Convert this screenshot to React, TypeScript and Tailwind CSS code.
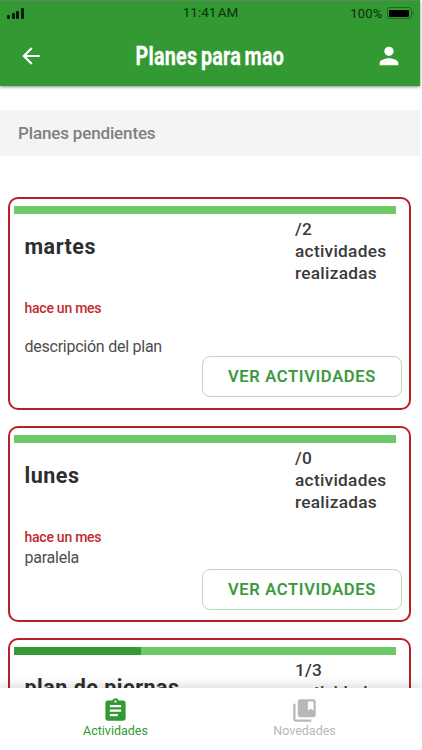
import { MdArrowBack, MdAssignment, MdCollectionsBookmark, MdPerson } from "react-icons/md";

type Plan = {
  name: string;
  done: string;
  progress: number;
  age: string;
  description: string;
  spaced: boolean;
};

const plans: Plan[] = [
  { name: "martes", done: "/2", progress: 0, age: "hace un mes", description: "descripción del plan", spaced: true },
  { name: "lunes", done: "/0", progress: 0, age: "hace un mes", description: "paralela", spaced: false },
  { name: "plan de piernas", done: "1/3", progress: 33.4, age: "hace un mes", description: "", spaced: false },
];

function StatusBar() {
  return (
    <div className="flex h-[25px] items-center justify-between border-t border-[#5f8560] pr-[6px] pl-[7px] text-[#0b2f0b]">
      <div className="flex w-[80px] items-end gap-[1.5px]">
        <i className="h-[4px] w-[3px] rounded-[1px] bg-[#071c07]" />
        <i className="h-[6px] w-[3px] rounded-[1px] bg-[#071c07]" />
        <i className="h-[8px] w-[3px] rounded-[1px] bg-[#071c07]" />
        <i className="h-[11px] w-[3px] rounded-[1px] bg-[#071c07]" />
      </div>
      <span className="text-[13.5px] leading-none [word-spacing:-2px] whitespace-nowrap">11:41 AM</span>
      <div className="flex w-[80px] items-center justify-end">
        <span className="mr-[4px] text-[13px] leading-none tracking-[0.2px]">100%</span>
        <span className="flex h-[12px] w-[25px] rounded-[3px] border border-[#1c6a1c] p-[1.5px]">
          <i className="flex-1 rounded-[1px] bg-black" />
        </span>
        <i className="ml-px h-[4px] w-[1.5px] rounded-r bg-[#1c6a1c]" />
      </div>
    </div>
  );
}

function PlanCard({ plan }: { plan: Plan }) {
  return (
    <article
      className={`shrink-0 rounded-[10px] border-2 border-[#b92025] bg-white pt-[7px] pr-[7px] pl-[4px] ${plan.spaced ? "h-[213px]" : "h-[196px]"}`}
    >
      <div className="mr-[6.5px] h-[8px] bg-[#6dca66]">
        <div className="h-full bg-[#379837]" style={{ width: `${plan.progress}%` }} />
      </div>
      <div className="flex h-[86px] justify-between pl-[10.5px]">
        <h2 className="pt-[21px] text-[21.5px] leading-[24px] font-bold tracking-[0.5px] whitespace-nowrap text-[#2e2e2e]">{plan.name}</h2>
        <p className="w-[107px] pt-[4px] text-[17.3px] leading-[22px] font-medium tracking-[0.27px] text-[#3a3a3a]">
          {plan.done} actividades realizadas
        </p>
      </div>
      <div className={`flex flex-col pl-[10.5px] ${plan.spaced ? "h-[56px] gap-[21px]" : "h-[40px]"}`}>
        <span className="text-[14px] leading-[16px] font-medium tracking-[-0.25px] text-[#c12a30]">{plan.age}</span>
        <span className={`text-[16px] leading-[20px] tracking-[-0.25px] text-[#4d4d4d] ${plan.spaced ? "" : "mt-[3px]"}`}>{plan.description}</span>
      </div>
      <div className="flex justify-end">
        <button className="h-[41px] w-[200px] rounded-[8px] border border-[#b9dcb9] pt-[2px] text-[16.5px] font-medium tracking-[0.7px] text-[#3a993b] [-webkit-text-stroke:0.2px_#3a993b]">
          VER ACTIVIDADES
        </button>
      </div>
    </article>
  );
}

export default function App() {
  return (
    <div className="flex h-[750px] w-[422px] flex-col overflow-hidden bg-white font-['Roboto',sans-serif]">
      <header className="z-10 mr-[2px] h-[86px] shrink-0 bg-[#339933] shadow-[0_1px_3px_rgba(0,0,0,0.45)]">
        <StatusBar />
        <div className="flex h-[61px] items-center justify-between pr-[19px] pl-[18px] text-white">
          <MdArrowBack size={26} />
          <h1 className="flex w-[148px] justify-center text-[26px] leading-none font-bold whitespace-nowrap">
            <span className="scale-x-[0.76] tracking-[0.3px] [word-spacing:-2px] [-webkit-text-stroke:0.3px_white]">Planes para mao</span>
          </h1>
          <MdPerson size={28} className="-mr-[2px]" />
        </div>
      </header>
      <main className="flex min-h-0 flex-1 flex-col overflow-hidden pt-[24px]">
        <div className="mr-[2px] flex h-[46px] shrink-0 items-center bg-[#f4f4f4] pt-px pl-[18px] text-[17px] font-medium tracking-[-0.15px] text-[#808080]">
          Planes pendientes
        </div>
        <div className="flex flex-col gap-[16px] pt-[41px] pr-[11px] pl-[8px]">
          {plans.map((plan) => (
            <PlanCard key={plan.name} plan={plan} />
          ))}
        </div>
      </main>
      <nav className="z-10 grid h-[62px] shrink-0 grid-cols-2 bg-white pr-[23px] pl-[21px] text-[12.5px] leading-[14px] shadow-[0_-1px_12px_rgba(0,0,0,0.18)]">
        <div className="flex flex-col items-center pt-[9px] text-[#339933]">
          <MdAssignment size={27} />
          <span>Actividades</span>
        </div>
        <div className="flex flex-col items-center pt-[9px] text-[#b8b8b8]">
          <MdCollectionsBookmark size={27} />
          <span>Novedades</span>
        </div>
      </nav>
    </div>
  );
}
